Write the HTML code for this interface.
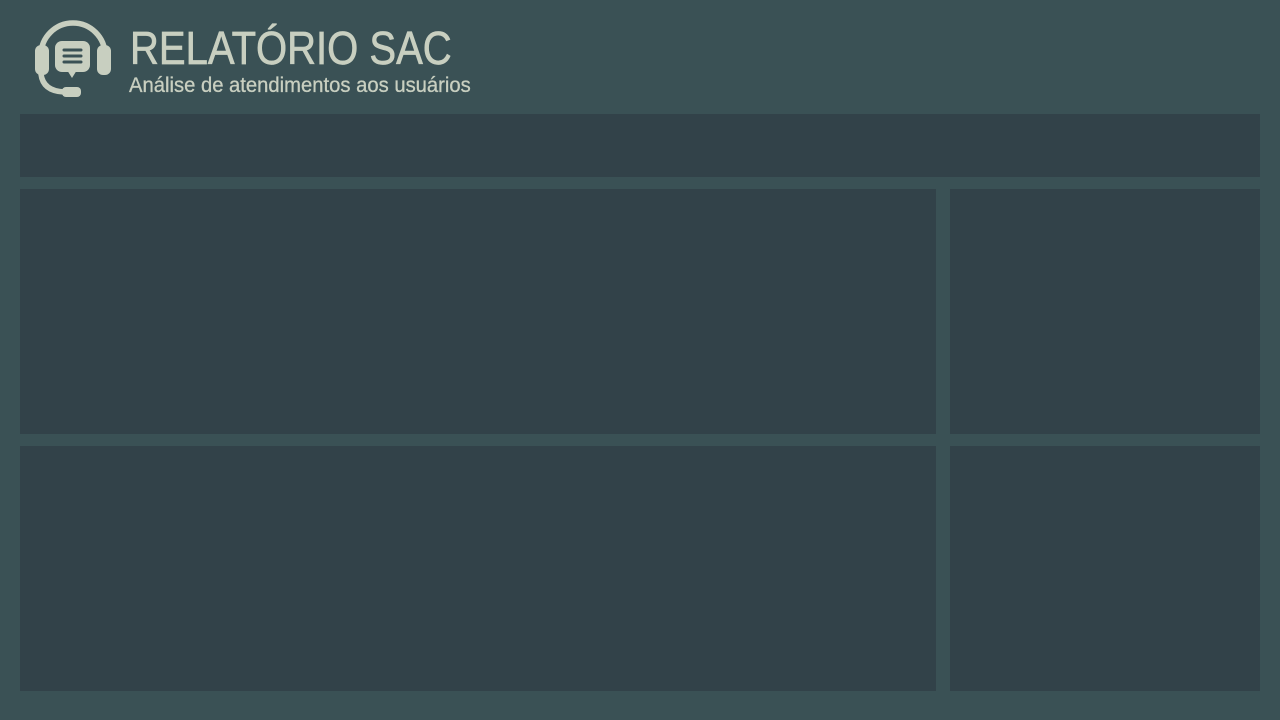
<!DOCTYPE html>
<html><head><meta charset="utf-8"><style>
body{margin:0;width:1280px;height:720px;background:#3a5155;font-family:"Liberation Sans",sans-serif;overflow:hidden;position:relative}
.p{position:absolute;background:#324249}
.t{position:absolute;left:130px;top:22px;font-size:46px;line-height:1.15;color:#c8cfc0;white-space:nowrap;transform:scaleX(0.87);transform-origin:0 0;-webkit-text-stroke:0.7px #c8cfc0}
.s{position:absolute;left:129px;top:74px;font-size:21px;line-height:1.15;color:#c8cfc0;white-space:nowrap;transform:scaleX(0.963);transform-origin:0 0;-webkit-text-stroke:0.3px #c8cfc0}
</style></head><body>
<svg style="position:absolute;left:30px;top:10px" width="90" height="92" viewBox="30 10 90 92">
<g fill="none" stroke="#c8cfc0" stroke-width="5.5" stroke-linecap="round">
<path d="M41 55 A32 32 0 0 1 105 55"/>
<path d="M41 74 Q43 91 64 92"/>
</g>
<g fill="#c8cfc0">
<rect x="35" y="45" width="14" height="30" rx="6"/>
<rect x="97" y="45" width="14" height="30" rx="6"/>
<rect x="62" y="87" width="19" height="10" rx="4"/>
<rect x="55" y="41" width="35" height="31" rx="7"/>
<path d="M67 70 L72 78 L77 70 Z"/>
</g>
<g stroke="#3a5155" stroke-width="3" stroke-linecap="round">
<line x1="64" y1="50" x2="81" y2="50"/><line x1="64" y1="56" x2="81" y2="56"/><line x1="64" y1="62" x2="81" y2="62"/>
</g>
</svg>
<div class="t">RELATÓRIO SAC</div>
<div class="s">Análise de atendimentos aos usuários</div>
<div class="p" style="left:20px;top:114px;width:1240px;height:63px"></div>
<div class="p" style="left:20px;top:189px;width:916px;height:245px"></div>
<div class="p" style="left:950px;top:189px;width:310px;height:245px"></div>
<div class="p" style="left:20px;top:446px;width:916px;height:245px"></div>
<div class="p" style="left:950px;top:446px;width:310px;height:245px"></div>
</body></html>
